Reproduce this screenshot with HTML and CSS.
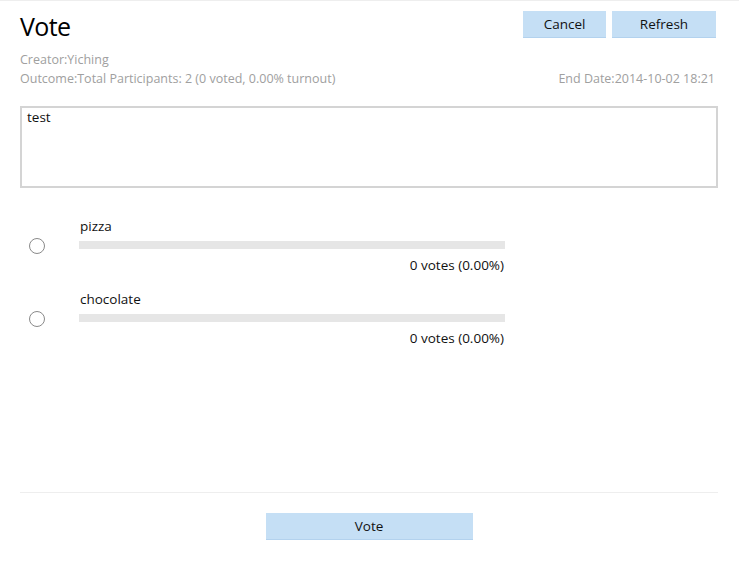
FILE: index.html
```html
<!DOCTYPE html>
<html lang="en">
<head>
  <meta charset="UTF-8">
  <title>Vote</title>
  <link rel="stylesheet" href="styles.css">
</head>
<body>
  <div class="page">
    <div class="header">
      <h1>Vote</h1>
      <div class="actions">
        <button class="btn btn-cancel">Cancel</button>
        <button class="btn btn-refresh">Refresh</button>
      </div>
    </div>

    <div class="meta">
      <div>Creator:Yiching</div>
      <div class="meta-row">
        <span>Outcome:Total Participants: 2 (0 voted, 0.00% turnout)</span>
        <span>End Date:2014-10-02 18:21</span>
      </div>
    </div>

    <div class="description">test</div>

    <div class="options">
      <div class="option">
        <span class="radio"></span>
        <div class="option-body">
          <div class="option-name">pizza</div>
          <div class="bar"><div class="bar-fill" style="width: 0%"></div></div>
          <div class="option-count">0 votes (0.00%)</div>
        </div>
      </div>
      <div class="option">
        <span class="radio"></span>
        <div class="option-body">
          <div class="option-name">chocolate</div>
          <div class="bar"><div class="bar-fill" style="width: 0%"></div></div>
          <div class="option-count">0 votes (0.00%)</div>
        </div>
      </div>
    </div>

    <div class="footer">
      <button class="btn btn-vote">Vote</button>
    </div>
  </div>
</body>
</html>
```

FILE: styles.css
```css
body {
  margin: 0;
  font-family: "Open Sans", "Noto Sans", sans-serif;
  font-size: 13.5px;
  color: #111;
  background: #fff;
  border-top: 1px solid #eee;
}
.page {
  padding: 10px 21px 0 20px;
}
.header {
  display: flex;
  justify-content: space-between;
  align-items: flex-start;
}
h1 {
  margin: 0;
  font-size: 25px;
  font-weight: normal;
  line-height: 30px;
  color: #000;
  letter-spacing: -0.6px;
}
.actions {
  display: flex;
  gap: 6px;
  margin-right: 2px;
}
.btn {
  font-family: inherit;
  font-size: 13.5px;
  color: #111;
  background-color: #c5dff5;
  border: none;
  border-bottom: 1px solid #b3d2ee;
  height: 27px;
  padding: 0;
  cursor: pointer;
}
.btn-cancel {
  width: 83px;
}
.btn-refresh {
  width: 104px;
}
.meta {
  margin-top: 9px;
  color: #a0a0a0;
  font-size: 12.5px;
  line-height: 19px;
}
.meta-row {
  display: flex;
  justify-content: space-between;
  padding-right: 3px;
}
.description {
  margin-top: 18px;
  height: 78px;
  border: 2px solid #d4d4d4;
  padding: 0 5px;
  line-height: 18px;
}
.options {
  margin-top: 29px;
  height: 275px;
}
.option {
  display: flex;
  align-items: flex-start;
  margin-bottom: 16px;
}
.radio {
  width: 16px;
  height: 16px;
  border: 1px solid #8a8a8a;
  border-radius: 50%;
  margin: 21px 0 0 9px;
  box-sizing: border-box;
}
.option-body {
  margin-left: 34px;
  width: 426px;
}
.option-name {
  line-height: 18px;
  padding-left: 1px;
}
.bar {
  margin-top: 6px;
  height: 8px;
  background: #e6e6e6;
}
.bar-fill {
  height: 100%;
  background: #7fb2e0;
}
.option-count {
  text-align: right;
  line-height: 18px;
  margin-top: 7px;
  padding-right: 1px;
}
.footer {
  border-top: 1px solid #eee;
  padding-top: 20px;
  text-align: center;
}
.btn-vote {
  width: 207px;
}
```
